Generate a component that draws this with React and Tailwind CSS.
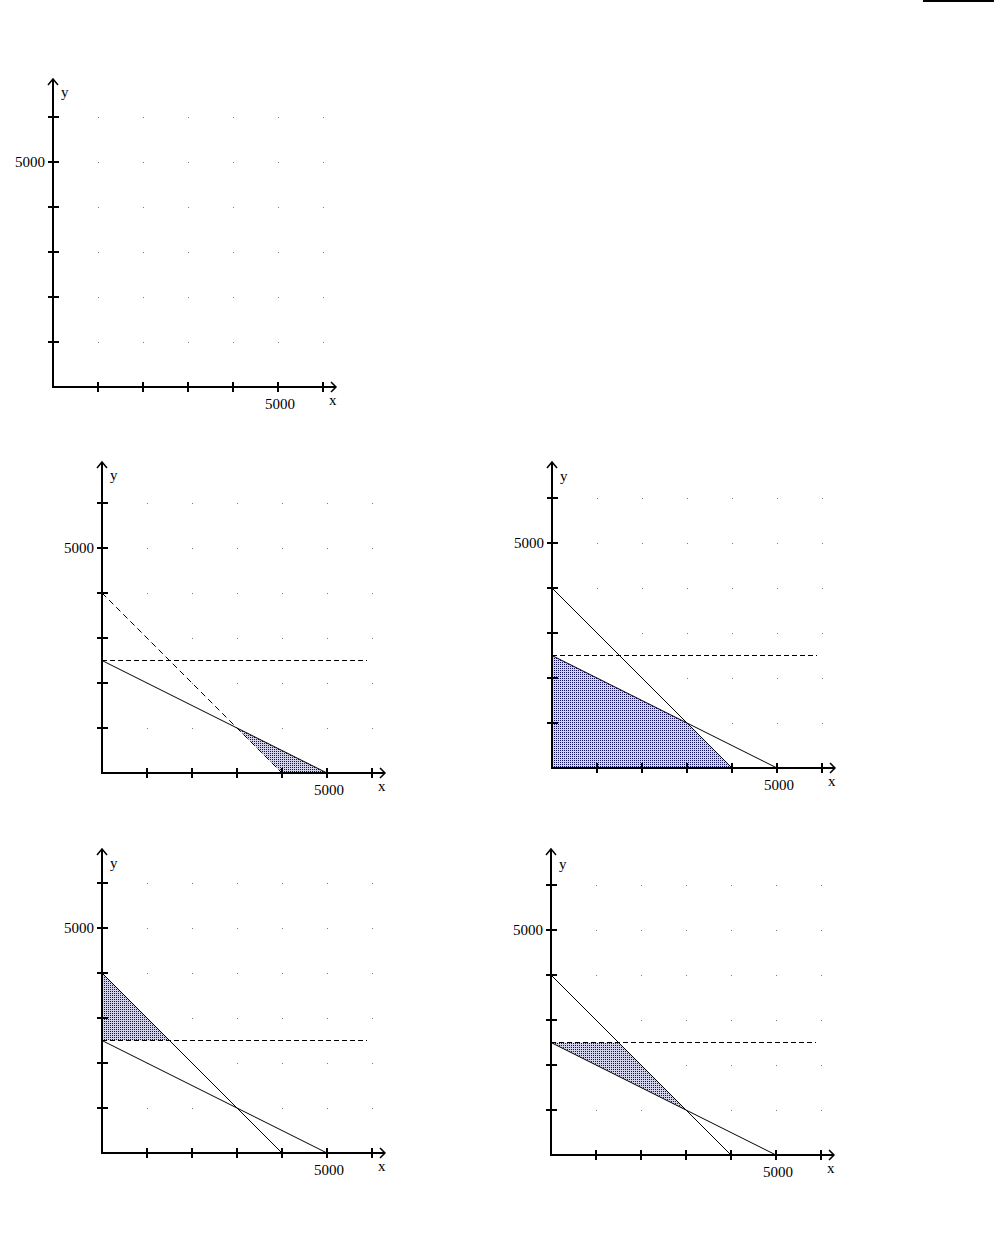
import React from 'react';

const S = 45; // pixels per 1000 units
const OX = 50;
const OY = 320;

const px = (x) => OX + (x * S) / 1000;
const py = (y) => OY - (y * S) / 1000;
const pts = (list) => list.map(([x, y]) => `${px(x)},${py(y)}`).join(' ');

const SHADE = {
  b: [[3000, 1000], [5000, 0], [4000, 0]],
  c: [[0, 0], [0, 2500], [3000, 1000], [4000, 0]],
  d: [[0, 4000], [0, 2500], [1500, 2500]],
  e: [[0, 2500], [1500, 2500], [3000, 1000]],
};

function Graph({ id, variant, tip = 308, ylab = 290 }) {
  const steps = [1, 2, 3, 4, 5, 6];
  const shade = SHADE[variant];

  return (
    <svg
      width="340"
      height="350"
      viewBox="0 0 340 350"
      className="block font-['Liberation_Serif',serif] text-[15px]"
    >
      <defs>
        <pattern id={`dots-${id}`} width="2" height="2" patternUnits="userSpaceOnUse">
          <rect x="0" y="0" width="2" height="2" fill="#d2d2ea" />
          <rect x="0" y="0" width="1" height="1" fill="#12125c" />
        </pattern>
      </defs>

      {/* grid dots */}
      {steps.map((i) =>
        steps.map((j) => (
          <rect key={`${i}-${j}`} x={OX + i * S} y={OY - j * S} width="1" height="1" fill="#7c7c7c" />
        ))
      )}

      {shade && <polygon points={pts(shade)} fill={`url(#dots-${id})`} />}

      {variant && (
        <>
          <line
            x1={px(0)} y1={py(4000)} x2={px(4000)} y2={py(0)}
            stroke="#000" strokeWidth="1"
            strokeDasharray={variant === 'b' ? '6 4' : undefined}
          />
          <line x1={px(0)} y1={py(2500)} x2={px(5000)} y2={py(0)} stroke="#000" strokeWidth="1" />
          <line
            x1={px(0)} y1={py(2500)} x2={OX + 265} y2={py(2500)}
            stroke="#000" strokeWidth="1" strokeDasharray="5 3"
          />
        </>
      )}

      {/* axes */}
      <line x1={OX} y1={OY + 1} x2={OX} y2={OY - tip} stroke="#000" strokeWidth="2" />
      <line x1={OX} y1={OY} x2={OX + 283} y2={OY} stroke="#000" strokeWidth="2" />
      <polyline points={`${OX - 5},${OY - tip + 6} ${OX},${OY - tip} ${OX + 5},${OY - tip + 6}`} fill="none" stroke="#000" strokeWidth="1.5" />
      <polyline points={`${OX + 278},${OY - 5} ${OX + 283},${OY} ${OX + 278},${OY + 5}`} fill="none" stroke="#000" strokeWidth="1.5" />

      {steps.map((j) => (
        <line key={`yt${j}`} x1={OX - 5} y1={OY - j * S} x2={OX + 6} y2={OY - j * S} stroke="#000" strokeWidth="2" />
      ))}
      {steps.map((i) => (
        <line key={`xt${i}`} x1={OX + i * S} y1={OY - 5} x2={OX + i * S} y2={OY + 5} stroke="#000" strokeWidth="2" />
      ))}

      <text x={OX + 8} y={OY - ylab} fill="#000">y</text>
      <text x={OX + 276} y={OY + 18} fill="#000">x</text>
      <text x={OX - 8} y={OY - 5 * S + 5} textAnchor="end" fill="#000">5000</text>
      <text x={OX + 212} y={OY + 22} fill="#000">5000</text>
    </svg>
  );
}

export default function App() {
  return (
    <div className="w-[994px] h-[1241px] bg-white overflow-hidden">
      <div className="flex justify-end">
        <div className="w-[71px] h-[2px] bg-black" />
      </div>

      <div className="mt-[65px] ml-[3px]">
        <Graph id="a" tip={308} ylab={290} />
      </div>

      <div className="flex items-start pl-[52px]">
        <div className="flex flex-col w-[450px]">
          <div className="mt-[36px]">
            <Graph id="b" variant="b" tip={311} ylab={293} />
          </div>
          <div className="mt-[30px]">
            <Graph id="d" variant="d" tip={304} ylab={285} />
          </div>
        </div>
        <div className="flex flex-col">
          <div className="mt-[31px]">
            <Graph id="c" variant="c" tip={306} ylab={287} />
          </div>
          <div className="mt-[37px] ml-[-1px]">
            <Graph id="e" variant="e" tip={306} ylab={286} />
          </div>
        </div>
      </div>
    </div>
  );
}
